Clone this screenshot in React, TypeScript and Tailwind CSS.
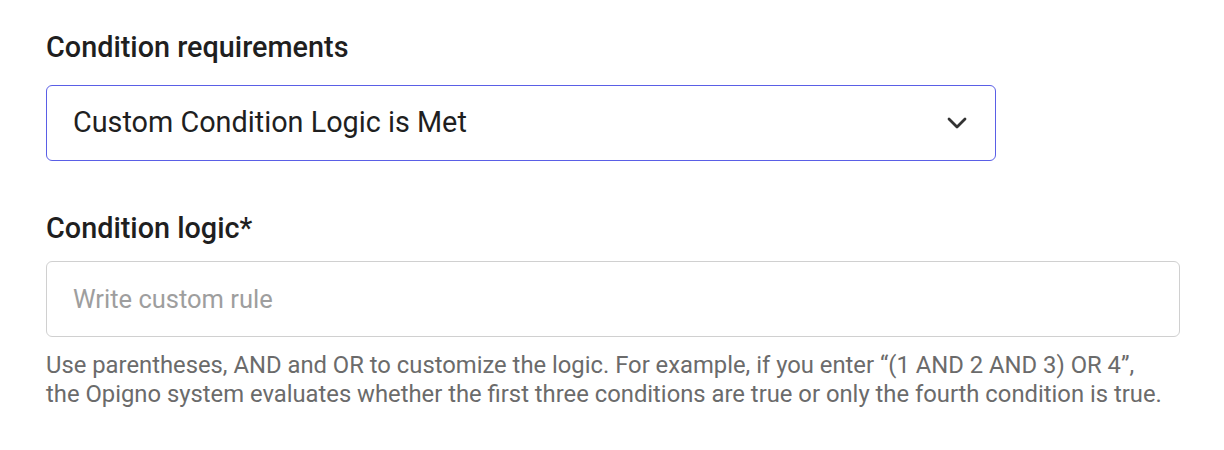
import { ChevronDown } from 'lucide-react';

const App = () => {
    return (
        <div className="min-h-[450px] bg-white pl-[46px] pr-[44px] pt-[28px]" style={{ fontFamily: 'Roboto, "Noto Sans", sans-serif' }}>
            <div className="w-[950px]">
                <label className="block text-[28.8px] font-medium leading-[38px] text-[#1f1f1f]">Condition requirements</label>
                <div className="mt-[19px] flex h-[76px] items-center justify-between rounded-[6px] border border-[#5a5fe6] pl-[26px] pr-[22px]">
                    <span className="text-[28.8px] text-[#1f1f1f]">Custom Condition Logic is Met</span>
                    <ChevronDown className="h-[32px] w-[32px] text-[#333]" strokeWidth={2.1} />
                </div>
            </div>
            <label className="mt-[48px] block text-[28.8px] font-medium leading-[38px] text-[#1f1f1f]">Condition logic*</label>
            <div className="mt-[14px] flex h-[76px] w-[1134px] items-center rounded-[6px] border border-[#d0d0d0] pl-[26px]">
                <span className="text-[25.5px] text-[#9e9e9e]">Write custom rule</span>
            </div>
            <p className="mt-[14px] w-[1140px] whitespace-nowrap text-[23.8px] leading-[29px] text-[#6b6b6b]">
                Use parentheses, AND and OR to customize the logic. For example, if you enter “(1 AND 2 AND 3) OR 4”,
                <br />
                the Opigno system evaluates whether the first three conditions are true or only the fourth condition is true.
            </p>
        </div>
    );
};

export default App;
